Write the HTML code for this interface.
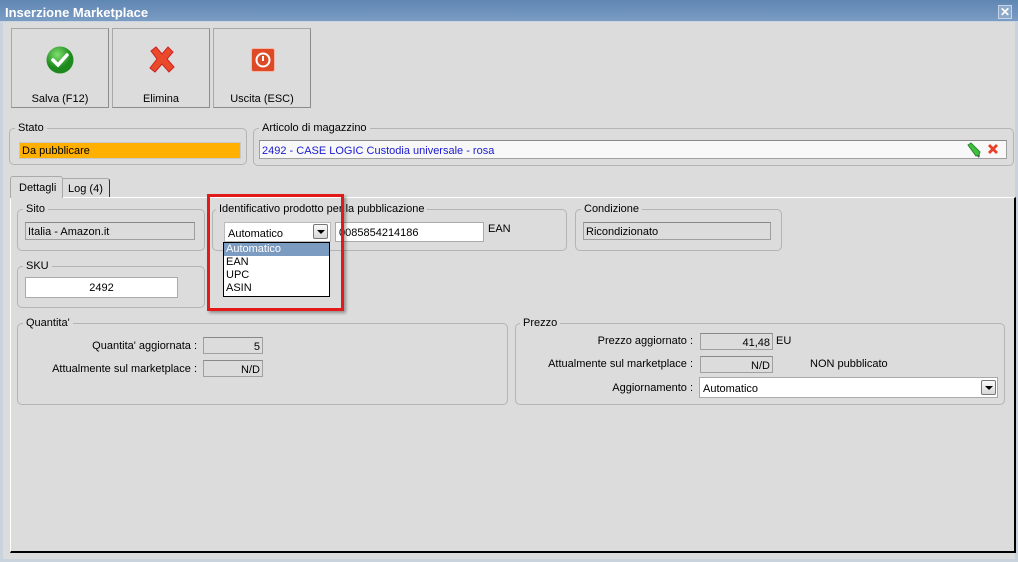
<!DOCTYPE html>
<html><head><meta charset="utf-8"><style>
*{box-sizing:border-box;margin:0;padding:0}
body{width:1018px;height:562px;overflow:hidden;background:#dcdcdc;font-family:"Liberation Sans",Tahoma,sans-serif;font-size:11px;color:#000;position:relative}
.a{position:absolute}
.title{left:0;top:0;width:1018px;height:22px;background:linear-gradient(#5f86b2,#7a9cc4);color:#fff;font-weight:bold;font-size:13px;padding:5px 0 0 5px;border-bottom:1px solid #c8d4e2}
.btn{top:28px;width:98px;height:80px;background:#dcdcdc;border:1px solid #a8a8a8;border-right-color:#8c8c8c;border-bottom-color:#8c8c8c;text-align:center}
.btn span{position:absolute;left:0;right:0;top:64px}
.grp{border:1px solid #b4b4b4;border-radius:5px}
.lbl{background:#dcdcdc;padding:0 3px}
.fld{border:1px solid #a0a0a0;border-top-color:#888;background:#dcdcdc;padding:3px 2px 2px;white-space:nowrap;overflow:hidden}
.w{background:#fff}
.r{text-align:right}
.ddb{width:15px;height:15px;border:1px solid #777;border-radius:2px;background:linear-gradient(#fafafa,#d8d8d8)}
.ddb:after{content:"";position:absolute;left:3px;top:5px;border:4px solid transparent;border-top:4px solid #000;border-bottom:0}
</style></head><body>
<div class="a title">Inserzione Marketplace</div>
<div class="a" style="left:998px;top:5px;width:14px;height:14px;background:#8ba9cb;border:1px solid #c5d4e6;color:#fff;font-size:12px;line-height:12px;text-align:center;font-weight:bold">✕</div>
<div class="a" style="left:0;top:22px;width:3px;height:540px;background:#c9d3de"></div>
<div class="a" style="left:1015px;top:22px;width:3px;height:540px;background:#c9d3de"></div>
<div class="a" style="left:0;top:559px;width:1018px;height:3px;background:#c9d3de"></div>

<div class="a btn" style="left:11px"><svg class="a" style="left:34px;top:17px" width="28" height="28"><defs><radialGradient id="g" cx="40%" cy="30%"><stop offset="0" stop-color="#7ee06e"/><stop offset="1" stop-color="#1e8a1e"/></radialGradient></defs><circle cx="14" cy="14" r="13.5" fill="url(#g)"/><path d="M7 14l5 5 9-10" stroke="#fff" stroke-width="3.5" fill="none" stroke-linecap="round"/></svg><span>Salva (F12)</span></div>
<div class="a btn" style="left:112px"><svg class="a" style="left:34px;top:16px" width="30" height="30"><path d="M4 6l5-4 6 7 6-7 5 5-6 7 7 8-5 5-7-8-7 8-5-4 7-9z" fill="#ea4a2a" stroke="#c22" stroke-width="1"/></svg><span>Elimina</span></div>
<div class="a btn" style="left:213px"><svg class="a" style="left:37px;top:19px" width="24" height="24"><rect x="0.5" y="0.5" width="23" height="23" rx="2" fill="#de4a26" stroke="#f5b7a6"/><circle cx="12" cy="12" r="6.5" stroke="#fff" stroke-width="2" fill="none"/><path d="M12 8v5" stroke="#fff" stroke-width="2"/></svg><span>Uscita (ESC)</span></div>

<div class="a grp" style="left:9px;top:128px;width:238px;height:37px"></div>
<div class="a lbl" style="left:15px;top:122px">Stato</div>
<div class="a fld" style="left:19px;top:142px;width:222px;height:17px;background:#ffb000;border-color:#c9c9c9;padding-top:2px">Da pubblicare</div>

<div class="a grp" style="left:253px;top:128px;width:761px;height:38px"></div>
<div class="a lbl" style="left:259px;top:122px">Articolo di magazzino</div>
<div class="a fld" style="left:259px;top:140px;width:748px;height:19px;background:#f8f8f8;color:#1a1ad0;padding-top:4px">2492 - CASE LOGIC Custodia universale - rosa</div>
<svg class="a" style="left:966px;top:142px" width="16" height="16"><path d="M2 3l3-2 9 9-1 3-3 1z" fill="#3fbf3f" stroke="#2a8a2a"/><path d="M11 14l3-1-1 3z" fill="#555"/></svg>
<svg class="a" style="left:987px;top:143px" width="12" height="12"><path d="M1 3l2-2 3 3 3-3 2 2-3 3 3 3-2 2-3-3-3 3-2-2 3-3z" fill="#e8402a"/></svg>

<div class="a" style="left:10px;top:197px;width:1006px;height:356px;border-top:1px solid #fff;border-right:2px solid #000;border-bottom:2px solid #000;border-left:1px solid #fff"></div>
<div class="a" style="left:10px;top:176px;width:53px;height:22px;border:1px solid #aaa;border-bottom:none;background:#dcdcdc;border-radius:3px 3px 0 0;padding:5px 0 0 8px">Dettagli</div>
<div class="a" style="left:63px;top:178px;width:47px;height:19px;border-right:1px solid #333;border-top:1px solid #aaa;border-radius:0 3px 0 0;padding:4px 0 0 5px">Log (4)</div>

<div class="a grp" style="left:17px;top:209px;width:188px;height:42px"></div>
<div class="a lbl" style="left:23px;top:203px">Sito</div>
<div class="a fld" style="left:25px;top:222px;width:170px;height:18px">Italia - Amazon.it</div>

<div class="a grp" style="left:212px;top:209px;width:355px;height:42px"></div>
<div class="a lbl" style="left:216px;top:203px">Identificativo prodotto per la pubblicazione</div>
<div class="a fld w" style="left:224px;top:222px;width:107px;height:20px;padding:5px 3px 0;border-color:#bbb">Automatico</div>
<div class="a ddb" style="left:313px;top:224px"></div>
<div class="a fld w" style="left:335px;top:222px;width:149px;height:20px;padding:4px 3px 0;border-color:#aaa">0085854214186</div>
<div class="a" style="left:488px;top:223px">EAN</div>

<div class="a grp" style="left:575px;top:209px;width:207px;height:42px"></div>
<div class="a lbl" style="left:581px;top:203px">Condizione</div>
<div class="a fld" style="left:583px;top:222px;width:188px;height:18px">Ricondizionato</div>

<div class="a grp" style="left:17px;top:266px;width:188px;height:42px"></div>
<div class="a lbl" style="left:23px;top:260px">SKU</div>
<div class="a fld w" style="left:25px;top:277px;width:153px;height:21px;text-align:center;padding-top:4px;border-color:#aaa">2492</div>

<div class="a" style="left:207px;top:194px;width:137px;height:117px;border:3px solid #e21a1a;box-shadow:2px 2px 3px rgba(0,0,0,.35)"></div>
<div class="a" style="left:223px;top:242px;width:107px;height:55px;background:#fff;border:1px solid #000;line-height:13px">
<div style="background:#7b9bc0;color:#fff;padding-left:2px">Automatico</div>
<div style="padding-left:2px">EAN</div><div style="padding-left:2px">UPC</div><div style="padding-left:2px">ASIN</div></div>

<div class="a grp" style="left:17px;top:323px;width:491px;height:82px"></div>
<div class="a lbl" style="left:23px;top:317px">Quantita'</div>
<div class="a r" style="left:20px;width:177px;top:340px">Quantita' aggiornata :</div>
<div class="a fld r" style="left:203px;top:337px;width:60px;height:17px">5</div>
<div class="a r" style="left:20px;width:177px;top:363px">Attualmente sul marketplace :</div>
<div class="a fld r" style="left:203px;top:360px;width:60px;height:17px">N/D</div>

<div class="a grp" style="left:515px;top:323px;width:490px;height:82px"></div>
<div class="a lbl" style="left:520px;top:317px">Prezzo</div>
<div class="a r" style="left:520px;width:173px;top:335px">Prezzo aggiornato :</div>
<div class="a fld r" style="left:700px;top:333px;width:73px;height:17px">41,48</div>
<div class="a" style="left:776px;top:335px">EU</div>
<div class="a r" style="left:520px;width:173px;top:358px">Attualmente sul marketplace :</div>
<div class="a fld r" style="left:700px;top:356px;width:73px;height:17px">N/D</div>
<div class="a" style="left:810px;top:358px">NON pubblicato</div>
<div class="a r" style="left:520px;width:173px;top:382px">Aggiornamento :</div>
<div class="a fld w" style="left:699px;top:377px;width:299px;height:21px;padding:5px 3px 0;border-color:#aaa">Automatico</div>
<div class="a ddb" style="left:981px;top:380px"></div>
</body></html>
